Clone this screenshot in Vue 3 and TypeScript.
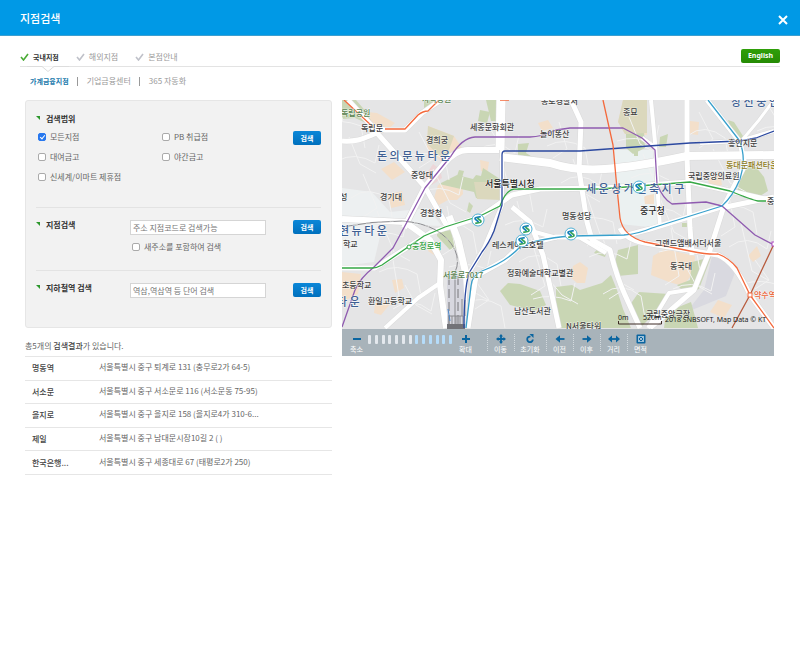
<script setup lang="ts">
import { ref } from 'vue'

interface Label { x: number; y: number; t: string; c?: string }
interface Tool { id: string; name: string }

const tabs = ['국내지점', '해외지점', '본점안내']
const subTabs = ['가계금융지점', '기업금융센터', '365 자동화']

const scopes = ref([
  { id: 'all', name: '모든지점', on: true },
  { id: 'pb', name: 'PB 취급점', on: false },
  { id: 'safe', name: '대여금고', on: false },
  { id: 'night', name: '야간금고', on: false },
  { id: 'mart', name: '신세계/이마트 제휴점', on: false },
])
const branchQuery = ref('')
const newAddress = ref(false)
const stationQuery = ref('')

const results = [
  { name: '명동역', address: '서울특별시 중구 퇴계로 131 (충무로2가 64-5)' },
  { name: '서소문', address: '서울특별시 중구 서소문로 116 (서소문동 75-95)' },
  { name: '을지로', address: '서울특별시 중구 을지로 158 (을지로4가 310-6...' },
  { name: '제일', address: '서울특별시 중구 남대문시장10길 2 ( )' },
  { name: '한국은행...', address: '서울특별시 중구 세종대로 67 (태평로2가 250)' },
]

const tools: Tool[] = [
  { id: 'move', name: '이동' },
  { id: 'reset', name: '초기화' },
  { id: 'prev', name: '이전' },
  { id: 'next', name: '이후' },
  { id: 'distance', name: '거리' },
  { id: 'area', name: '면적' },
]

const parks = [
  'M342 100h14l12 14 5 12-18-8-13 1z',
  'M439 184l18-9 16 4 3-4 5 1 2-8 17 11v20l-24-1-2-6z',
  'M486 100h14v21h-9z', 'M480 110l10 2-3 11-9-2z', 'M424 100h18l-8 8h-10z',
  'M518 144l11-1-3 10 8 5-8 6-8-3z', 'M467 211l2-9 4 4-3 7z', 'M459 170l5 1-2 7-5-2z',
  'M437 232l14-2 6 18-7 2-13-14z', 'M500 291l8-8 12 1 20 7 6 14-12 6-24-6z',
  'M594 253l8-10 5 8-2 6z', 'M618 250l20-5v29l-20 2-3-14z',
  'M556 287l16-2 8 5 22-7 9-8 6 15 6 19 8 19h-75z',
  'M632 302l7-10 30 2-10 15-19 19-8-14z', 'M692 262l19-5-12 32-14 4-8-8 13-5z',
  'M626 134l18-2 1 16-12 6-7-6z', 'M728 120l6 2 9 14 8 6-12 1-7-10z',
  'M744 166l12 1 8 10 4 14-14 9-17-8z', 'M660 137l8-3-2 13h-7z', 'M634 150h4v6h-4z',
  'M666 312l25-10 7 26h-34z', 'M682 223h6v4h-6z',
]
const sands = [
  'M623 100h24v35l-22-1-7-12z', 'M428 126l26 10 8 12-17 17-18-17z', 'M367 112l10 1 18 10-11 10-15-2z',
  'M381 169l13-7 11 10-13 8z', 'M438 185l10-4 3 6 11-7 1 14-6 6-9 0-11 6-3-8z',
  'M387 195l15-4 3 14-14 3z', 'M480 160l9 2-2 12-6-3z', 'M342 272l19 2-3 20-16 8z',
  'M375 303l16 0-10 12-7-2z', 'M392 280l10-1 2 9-9 5z', 'M432 242l6 9-4 4-6-4z',
  'M573 266l7-4 8 6-3 15-8 0-7-6z', 'M653 256l12-7 30 7-1 16-11 14-14-4-18-7z',
  'M690 121l9 1-1 13-8-1z', 'M708 180l12-7 2 12-11 4z', 'M644 196l10-2v10l-9 0z',
  'M710 312l8-12 14 5-8 13z', 'M748 256l9-10 4 10-8 6z', 'M538 123l10-3 5 8-11 3z',
  'M504 286l10 0 2 10-11 2z', 'M729 163l7-4v8l-7 1z', 'M748 190h11v9h-10z',
]
const roads: { d: string; w: number }[] = [
  { d: 'M342 141C358 142 364 138 377 133L425 187 448 228', w: 5 },
  { d: 'M348 100L373 127 385 130H405L422 113 441 100', w: 5 },
  { d: 'M404 228L425 187 444 164Q455 150 468 150H499', w: 6 },
  { d: 'M501 100L500 150', w: 9 },
  { d: 'M500 157L550 163Q574 171 605 169T687 156L774 155', w: 8 },
  { d: 'M571 100L581 122 579 170 587 222 592 240 610 250Q616 275 625 295L640 328', w: 5 },
  { d: 'M651 100L655 142 657 180 660 228', w: 4 },
  { d: 'M687 100L687 158 690 228 692 255', w: 5 },
  { d: 'M707 100L740 142 745 165 724 206 710 250 694 290 650 328', w: 5 },
  { d: 'M721 208L774 197', w: 5 },
  { d: 'M342 268H375L430 233 480 217 512 195 540 189 604 188 690 182 774 201', w: 5 },
  { d: 'M724 206L650 229 620 237H556L520 246 505 260 476 276 468 328', w: 5 },
  { d: 'M342 219L405 222 430 240 441 260 440 285 446 328', w: 6 },
  { d: 'M440 283L418 298 385 328', w: 4 },
  { d: 'M449 216L458 240 465 270 462 328', w: 7 },
  { d: 'M512 207L530 222 543 255 553 300 559 328', w: 5 },
  { d: 'M694 289L669 293 648 328', w: 4 },
  { d: 'M620 228Q626 240 645 243L718 255Q735 262 750 295L774 328', w: 5 },
  { d: 'M502 150V205L484 248 468 275', w: 4 },
  { d: 'M774 131L740 141 700 143', w: 4 },
  { d: 'M774 100L759 120 743 139', w: 3 },
  { d: 'M656 148L642 138 M579 237L606 253 M557 238L535 232', w: 4 },
]
const dots = [
  { x: 478, y: 220 }, { x: 526, y: 229 }, { x: 522, y: 241 }, { x: 571, y: 234 }, { x: 639, y: 187 },
]
const labels: Label[] = [
  { x: 341, y: 116, t: '독립공원', c: 'leaf' },
  { x: 361, y: 131, t: '독립문' },
  { x: 422, y: 102, t: '사직공원', c: 'leaf' },
  { x: 426, y: 143, t: '경희궁' },
  { x: 470, y: 130, t: '세종문화회관' },
  { x: 540, y: 137, t: '놀이똥산' },
  { x: 541, y: 104, t: '종로경찰서' },
  { x: 377, y: 160, t: '돈 의 문 뉴 타 운', c: 'district' },
  { x: 411, y: 178, t: '중앙대' },
  { x: 380, y: 200, t: '경기대' },
  { x: 340, y: 200, t: '성' },
  { x: 420, y: 216, t: '경찰청' },
  { x: 485, y: 187, t: '서울특별시청', c: 'city' },
  { x: 623, y: 115, t: '종묘' },
  { x: 731, y: 106, t: '창 신 숭 인', c: 'district' },
  { x: 728, y: 146, t: '흥인지문' },
  { x: 726, y: 168, t: '동대문패션타운', c: 'gold' },
  { x: 688, y: 179, t: '국립중앙의료원' },
  { x: 586, y: 193, t: '세 운 상 가 건 축 지 구', c: 'district' },
  { x: 640, y: 214, t: '중구청', c: 'city' },
  { x: 562, y: 219, t: '명동성당' },
  { x: 767, y: 204, t: '중' },
  { x: 339, y: 235, t: '현 뉴 타 운', c: 'district' },
  { x: 343, y: 247, t: '학교' },
  { x: 412, y: 249, t: '충정로역', c: 'green' },
  { x: 492, y: 248, t: '레스케이프호텔' },
  { x: 443, y: 278, t: '서울로7017', c: 'leaf' },
  { x: 507, y: 276, t: '정화예술대학교별관' },
  { x: 342, y: 288, t: '초등학교' },
  { x: 337, y: 306, t: '타 운', c: 'district' },
  { x: 368, y: 304, t: '환일고등학교' },
  { x: 514, y: 314, t: '남산도서관' },
  { x: 566, y: 329, t: 'N서울타워' },
  { x: 655, y: 246, t: '그랜드앰배서더서울' },
  { x: 670, y: 269, t: '동국대' },
  { x: 754, y: 298, t: '약수역', c: 'orange' },
  { x: 646, y: 317, t: '국립중앙극장' },
]

// Faint side streets behind the main roads.
const lanes = Array.from({ length: 34 }, (_, i) => {
  const x = 335 + i * 14
  const y = 100 + ((i * 37) % 190)
  return `M${x} ${y}l${8 + (i % 4) * 3} ${20 + (i % 5) * 7}l${i % 2 ? 16 : -14} 9 M${x - 12} ${y + 24}q18 ${-6 - (i % 3) * 4} 38 2l4 ${i % 2 ? -18 : 22}`
}).join(' ')
</script>

<template>
  <div class="page">
    <header class="top">
      <h1>지점검색</h1>
      <button class="close" type="button" aria-label="닫기">
        <svg viewBox="0 0 10 10"><path d="M1 1l8 8M9 1L1 9" /></svg>
      </button>
    </header>

    <div class="tabbar">
      <nav class="tabs">
        <a v-for="(tab, i) in tabs" :key="tab" href="#" :class="{ active: i === 0 }">
          <svg viewBox="0 0 9 8"><path d="M1 4l2.5 3L8 1" /></svg>{{ tab }}
        </a>
      </nav>
      <button class="english" type="button">English</button>
      <svg class="notch" viewBox="0 0 42 7"><path d="M0 .5h15l6 5 6-5h15" /></svg>
    </div>
    <nav class="subtabs">
      <a v-for="(tab, i) in subTabs" :key="tab" href="#" :class="{ active: i === 0 }">{{ tab }}</a>
    </nav>

    <main class="columns">
      <div class="left">
        <div class="panel">
          <form class="section scope" @submit.prevent>
            <h2>검색범위</h2>
            <div class="scope-row">
              <div class="checks">
                <label v-for="s in scopes" :key="s.id"><input v-model="s.on" type="checkbox">{{ s.name }}</label>
              </div>
              <button class="search" type="submit">검색</button>
            </div>
          </form>
          <form class="section field branch" @submit.prevent>
            <h2><label for="branch">지점검색</label></h2>
            <div class="inputs">
              <input id="branch" v-model="branchQuery" class="text" type="text" placeholder="주소 지점코드로 검색가능">
              <label class="extra"><input v-model="newAddress" type="checkbox">새주소를 포함하여 검색</label>
            </div>
            <button class="search" type="submit">검색</button>
          </form>
          <form class="section field" @submit.prevent>
            <h2><label for="station">지하철역 검색</label></h2>
            <div class="inputs">
              <input id="station" v-model="stationQuery" class="text" type="text" placeholder="역삼,역삼역 등 단어 검색">
            </div>
            <button class="search" type="submit">검색</button>
          </form>
        </div>

        <p class="count">총5개의 <strong>검색결과</strong>가 있습니다.</p>
        <table class="results">
          <tbody>
            <tr v-for="r in results" :key="r.name">
              <th scope="row">{{ r.name }}</th>
              <td>{{ r.address }}</td>
            </tr>
          </tbody>
        </table>
      </div>

      <section class="map">
        <svg class="canvas" viewBox="342 100 432 229" preserveAspectRatio="xMidYMid slice">
          <rect x="342" y="100" width="432" height="229" fill="#e5e5e6" />
          <path d="M342 188l30 4 18 20 38-4 14 18-52-2-48 12zM342 226l40 2-8 34-32 4z" fill="#edf0f1" />
          <path d="M613 150l42 0 3 78-38-4z" fill="#ebf1f1" />
          <path d="M712 256l8-4 16 18-10 26-34 14-10 18-8 0 30-38z" fill="#d9d9e0" />
          <path d="M424 178l9-14 7 5 2 9-10 7z" fill="#edd6d8" />
          <path v-for="d in sands" :key="d" :d="d" fill="#f3dfca" />
          <path v-for="d in parks" :key="d" :d="d" fill="#c9d6b4" />
          <path d="M623 100h24v33l-22 1-7-12zM474 182h27v18l-24-1zM428 126l26 10-9 25-18-17z" fill="#dbd8bd" />
          <path :d="lanes" class="lane" />
          <g class="casing"><path v-for="r in roads" :key="r.d" :d="r.d" :stroke-width="r.w + 1" /></g>
          <g class="road"><path v-for="r in roads" :key="r.d" :d="r.d" :stroke-width="r.w" /></g>

          <path d="M447 274h16l3 54h-19z" fill="#d7d7df" />
          <path d="M342 227Q372 221 402 221 442 224 455 250 460 262 455 272V328" class="rail" />
          <path d="M342 227Q372 221 402 221 442 224 455 250 460 262 455 272" class="rail dash" />
          <path d="M449 276V328M458 276V328" class="rail long" />
          <path d="M449 328v-12h14v12M452 316v12M456 316v12M460 316v12M462 299v17M465 300v16" class="rail" />
          <path d="M447 324h18v5h-18z" fill="#727277" />
          <path d="M448 309l2 12" stroke="#4b86c8" />

          <g class="line">
            <path stroke="#8f5bb0" d="M342 327L355 290Q361 277 373 268L393 248 407 222 425 188 451 156Q462 138 475 137H530Q541 137 556 130L570 128H623L642 138 655 150 657 184Q663 199 672 204L706 202 722 206 755 235 774 245" />
            <path stroke="#36a846" d="M342 268H372Q377 268 382 265L424 236 445 227 480 216 500 206Q506 190 514 189H600L690 182 730 191Q752 200 758 201H766" />
            <path stroke="#2c49a0" d="M774 131L756 138 740 141 690 143 580 151H505Q502 151 502 155V205L494 231Q489 243 482 252L469 273Q464 290 464 328" />
            <path stroke="#38a0cc" d="M708 100L739 140Q747 158 740 179 733 196 722 206L652 228Q638 234 624 235L571 236Q535 239 520 247 506 262 482 271 472 275 471 286L466 328" />
            <path stroke="#f4693c" d="M603 100L613 145 616 178 620 218Q623 236 645 242L690 251Q710 255 718 254 729 258 737 268L750 295 774 328M344 100L373 127M385 129H405L418 115Q423 111 428 111L439 100M500 100h9" />
            <path stroke="#b75b3d" d="M774 244L750 295 732 328" />
          </g>
          <circle cx="409" cy="247" r="2" fill="#fff" stroke="#36a846" />
          <rect x="748" y="293" width="4" height="4" fill="#fff" stroke="#f4693c" />
          <rect x="772" y="242" width="4" height="4" fill="#fff" stroke="#b04cc4" />
          <text v-for="l in labels" :key="l.t + l.x" :x="l.x" :y="l.y" class="label" :class="l.c">{{ l.t }}</text>

          <g v-for="d in dots" :key="d.x" :transform="`translate(${d.x} ${d.y})`">
            <circle r="6" fill="#fff" stroke="#50b0d5" />
            <g fill="none" stroke-width="1.7">
              <path d="M2.8-3.3L-1.8-2.5C-3.8-1.9-3-.8-1.8-.1L.6 2" stroke="#1480b8" />
              <path d="M-2.8 3.3L1.8 2.5C3.8 1.9 3 .8 1.8.1L-.6-2" stroke="#37a35b" />
            </g>
          </g>

          <path d="M618.500 321v3h43v-3" fill="none" stroke="#3c2a24" />
          <text x="618" y="320" class="note">0m</text>
          <text x="643" y="320" class="note">520m</text>
          <text x="665" y="322" class="note">2018 SNBSOFT, Map Data © KT</text>
        </svg>

        <div class="toolbar">
          <button type="button" class="zoom">
            <svg viewBox="0 0 10 10"><path d="M1 5h8" class="thick" /></svg>축소
          </button>
          <div class="ticks"><i v-for="n in 13" :key="n" :class="{ lit: n > 7 }" /></div>
          <button type="button" class="zoom">
            <svg viewBox="0 0 10 10"><path d="M1 5h8M5 1v8" class="thick" /></svg>확대
          </button>
          <div class="tools">
            <button v-for="t in tools" :key="t.id" type="button" :class="t.id">
              <svg viewBox="0 0 12 10">
                <template v-if="t.id === 'move'">
                  <path d="M6 1.500v7M2.500 5h7" /><path class="solid" d="M6 0l2 2.500H4zM6 10l2-2.500H4zM1 5l2.500-2v4zM11 5L8.500 3v4z" />
                </template>
                <template v-else-if="t.id === 'reset'">
                  <path d="M6.500 2.600A2.800 2.800 0 1 0 8.800 5.500" /><path class="solid" d="M5.500 0h4v4z" />
                </template>
                <template v-else-if="t.id === 'prev'">
                  <path d="M4 5h6.500" /><path class="solid" d="M1.500 5L6 1.200v7.600z" />
                </template>
                <template v-else-if="t.id === 'next'">
                  <path d="M8 5H1.500" /><path class="solid" d="M10.500 5L6 1.200v7.600z" />
                </template>
                <template v-else-if="t.id === 'distance'">
                  <path d="M3 5h6" /><path class="solid" d="M0 5l4-3.500v7zM12 5L8 1.500v7z" />
                </template>
                <template v-else>
                  <rect class="solid" x="1.500" y="0.500" width="9" height="9" rx="1" />
                  <path class="fine" d="M3.500 2.500h5v5h-5zM3.500 2.500l5 5M8.500 2.500l-5 5" />
                </template>
              </svg>{{ t.name }}
            </button>
          </div>
        </div>
      </section>
    </main>
  </div>
</template>

<style>
body { background: #fff; }
</style>

<style scoped>
* { box-sizing: border-box; }
.page { font: 8px/12px "Noto Sans CJK KR", "Noto Sans", sans-serif; color: #666; }
button { font: inherit; border: 0; padding: 0; margin: 0; cursor: pointer; }
a { color: inherit; text-decoration: none; }
h1, h2, p { margin: 0; }
svg { display: block; }

.top { height: 36px; padding: 0 12px 0 20px; display: flex; justify-content: space-between; align-items: center; background: #0099e6; border-bottom: 1px solid #3c9fd0; }
h1 { color: #fff; font-size: 11px; line-height: 16px; font-weight: 500; }
.close { background: none; width: 10px; height: 10px; margin-top: 4px; }
.close svg { width: 10px; height: 10px; fill: none; stroke: #fff; stroke-width: 2; }

.tabbar { position: relative; margin: 10px 20px 0; height: 21px; display: flex; justify-content: space-between; align-items: center; border-bottom: 1px solid #e3e3e3; }
.tabs { display: flex; gap: 17px; color: #999; padding-top: 2px; }
.tabs a { display: flex; align-items: center; gap: 4px; }
.tabs svg { width: 9px; height: 8px; fill: none; stroke: #bfc1c9; stroke-width: 1.6; }
.tabs .active { color: #333; font-size: 7px; font-weight: 700; }
.tabs .active svg { stroke: #4aab35; }
.english { width: 39px; height: 14px; border-radius: 2px; background: linear-gradient(#2f9f09, #258b04); color: #fff; font: 700 7px/14px "Noto Sans", sans-serif; }
.notch { position: absolute; left: 7px; top: 20px; width: 42px; height: 7px; fill: #fff; stroke: #ddd; }

.subtabs { display: flex; margin: 8px 25px 0 30px; color: #999; }
.subtabs a + a { display: flex; align-items: center; margin-left: 8px; }
.subtabs a + a::before { content: ""; width: 1px; height: 9px; margin-right: 9px; background: #999; }
.subtabs .active { color: #1878ab; font-size: 7px; font-weight: 700; }

.columns { display: grid; grid-template-columns: minmax(0, 307fr) minmax(0, 432fr); column-gap: 10px; margin: 13px 26px 0 25px; align-items: start; }
.panel { background: #f2f2f2; border: 1px solid #e6e6e6; border-radius: 3px; padding: 0 10px; }
.section { padding-bottom: 20px; border-bottom: 1px solid #e3e3e3; }
.section:last-child { border: 0; padding-bottom: 29px; }
.section h2 { position: relative; padding-left: 10px; font-size: 8px; line-height: 12px; font-weight: 700; color: #333; }
.section h2::before { content: ""; position: absolute; left: 0; top: 3px; width: 4px; height: 4px; background: #2c972c; clip-path: polygon(0 0, 100% 0, 100% 100%); }
.scope { padding-top: 12px; }
.scope-row { display: flex; align-items: flex-start; margin-top: 2px; }
.scope-row .search { margin-top: 4px; }
.checks { flex: 1; display: grid; grid-template-columns: 124px 1fr; grid-auto-rows: 20px; padding-left: 2px; margin-top: 0; }
.checks label, .extra { display: flex; align-items: center; gap: 4px; white-space: nowrap; }
.checks label { height: 20px; }
input[type="checkbox"] { appearance: none; width: 8px; height: 8px; margin: 0; flex: none; background: #fff; border: 1px solid #aaa; border-radius: 2px; }
input[type="checkbox"]:checked { border-color: #2878ef; background: #2878ef; position: relative; }
input[type="checkbox"]:checked::after { content: ""; position: absolute; left: 2px; top: 0; width: 2px; height: 4px; border: solid #fff; border-width: 0 1px 1px 0; transform: rotate(40deg); }
.search { width: 28px; height: 14px; flex: none; border-radius: 2px; background: linear-gradient(#0b87d8, #0070bd); color: #fff; font-size: 7px; line-height: 14px; font-weight: 700; }
.field { display: flex; align-items: flex-start; padding-top: 11px; }
.branch { padding-bottom: 17px; }
.field h2 { flex: 0 0 94px; }
.field .search { margin-left: auto; margin-top: 1px; }
.text { display: block; width: 136px; height: 15px; margin-top: 1px; padding: 0 2px; border: 1px solid #d5d5d5; background: #fff; font: inherit; color: #555; border-radius: 0; }
.text::placeholder { color: #757575; opacity: 1; }
.extra { margin: 6px 0 0 2px; height: 12px; }

.count { margin-top: 12px; }
.count strong { color: #444; font-weight: 500; }
.results { width: 100%; height: 119px; margin-top: 4px; border-collapse: collapse; border-top: 1px solid #e6e6e6; text-align: left; table-layout: fixed; }
.results tr { border-bottom: 1px solid #e6e6e6; }
.results th { width: 74px; padding: 0 0 0 7px; font-weight: 500; color: #444; }
.results td { padding: 0 0 2px; white-space: nowrap; }

.canvas { width: 100%; height: auto; overflow: hidden; }
.lane { fill: none; stroke: #f2f2f2; stroke-width: 1; }
.casing, .road, .line { fill: none; stroke-linejoin: round; }
.casing { stroke: #dadada; }
.road { stroke: #fff; }
.line { stroke-width: 1.3; }
.rail { fill: none; stroke: #8b8b8f; }
.dash { stroke: #d5d5d5; stroke-dasharray: 4 8; }
.long { stroke: #77777b; stroke-dasharray: 9 4; }
.label { font-size: 8px; font-weight: 500; fill: #3e3e3e; paint-order: stroke; stroke: #ffffffb0; stroke-width: 1px; }
.city { font-size: 9px; fill: #222; }
.district { font-size: 11px; fill: #3e5f93; }
.leaf { fill: #54804a; }
.green { fill: #30a33d; }
.gold { fill: #8c7a18; }
.orange { fill: #ed6236; }
.note { font: 7px "Noto Sans", sans-serif; fill: #222; }

.toolbar { display: flex; height: 27px; padding: 0 0 0 3px; background: #a8b3ba; color: #fff; font-size: 7px; line-height: 9px; }
.toolbar button { background: none; color: #fff; display: flex; flex-direction: column; align-items: center; justify-content: center; gap: 1px; padding-top: 3px; }
.toolbar svg { height: 10px; width: 12px; fill: none; stroke: #0a65a0; stroke-width: 1.8; }
.toolbar .thick { stroke-width: 2; }
.toolbar .solid { fill: #0a65a0; stroke: none; }
.toolbar .fine { stroke: #c4d8e4; stroke-width: 0.8; }
.toolbar .zoom { width: 23px; }
.ticks { width: 84px; display: flex; justify-content: space-between; padding-top: 6px; }
.ticks i { width: 3px; height: 9px; border-radius: 1px; background: #e4e8ed; }
.ticks .lit { background: #b5dcfa; }
.ticks + .zoom { width: 27px; }
.tools { display: flex; margin-left: 8px; }
.tools button { width: 27px; position: relative; }
.tools .reset { width: 32px; }
.tools button::before { content: ""; position: absolute; left: 0; top: 5px; height: 17px; border-left: 1px dotted #d3dade; }
</style>
